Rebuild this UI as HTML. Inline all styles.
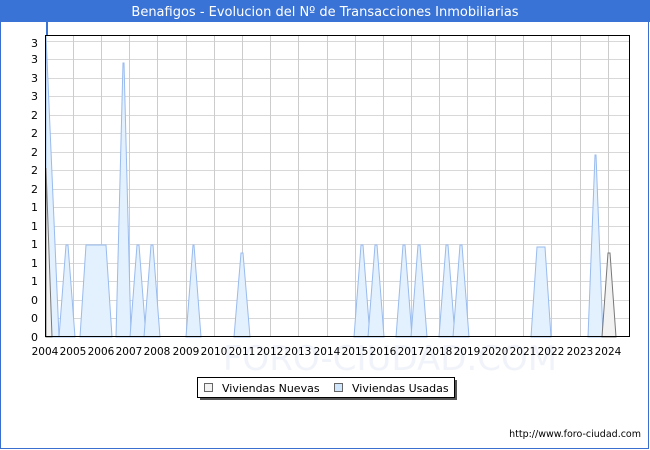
<!DOCTYPE html>
<html><head><meta charset="utf-8"><style>
html,body{margin:0;padding:0;background:#fff}
body{width:650px;height:450px;position:relative;overflow:hidden;font-family:"DejaVu Sans","Liberation Sans",sans-serif}
</style></head><body>
<svg width="650" height="450" xmlns="http://www.w3.org/2000/svg" style="position:absolute;left:0;top:0">
<rect x="0.5" y="0.5" width="648" height="448" fill="#fff" stroke="#3a6fd0"/>
<rect x="0" y="0" width="650" height="22" fill="#3a73d6"/>
<text x="325" y="16" text-anchor="middle" font-size="13" fill="#fff" font-family="DejaVu Sans,sans-serif">Benafigos - Evolucion del Nº de Transacciones Inmobiliarias</text>
<text x="390" y="370" text-anchor="middle" font-size="34" fill="#f1f3fa" font-family="DejaVu Sans,sans-serif">FORO-CIUDAD.COM</text>
<g stroke="#d8d8d8" stroke-width="1">
<line x1="45" y1="318.5" x2="630" y2="318.5"/><line x1="45" y1="300.5" x2="630" y2="300.5"/><line x1="45" y1="281.5" x2="630" y2="281.5"/><line x1="45" y1="263.5" x2="630" y2="263.5"/><line x1="45" y1="244.5" x2="630" y2="244.5"/><line x1="45" y1="226.5" x2="630" y2="226.5"/><line x1="45" y1="207.5" x2="630" y2="207.5"/><line x1="45" y1="189.5" x2="630" y2="189.5"/><line x1="45" y1="170.5" x2="630" y2="170.5"/><line x1="45" y1="152.5" x2="630" y2="152.5"/><line x1="45" y1="133.5" x2="630" y2="133.5"/><line x1="45" y1="115.5" x2="630" y2="115.5"/><line x1="45" y1="96.5" x2="630" y2="96.5"/><line x1="45" y1="78.5" x2="630" y2="78.5"/><line x1="45" y1="59.5" x2="630" y2="59.5"/><line x1="45" y1="41.5" x2="630" y2="41.5"/>
</g>
<g stroke="#cccccc" stroke-width="1">
<line x1="73.5" y1="35" x2="73.5" y2="337"/><line x1="101.5" y1="35" x2="101.5" y2="337"/><line x1="129.5" y1="35" x2="129.5" y2="337"/><line x1="157.5" y1="35" x2="157.5" y2="337"/><line x1="186.5" y1="35" x2="186.5" y2="337"/><line x1="214.5" y1="35" x2="214.5" y2="337"/><line x1="242.5" y1="35" x2="242.5" y2="337"/><line x1="270.5" y1="35" x2="270.5" y2="337"/><line x1="298.5" y1="35" x2="298.5" y2="337"/><line x1="327.5" y1="35" x2="327.5" y2="337"/><line x1="355.5" y1="35" x2="355.5" y2="337"/><line x1="383.5" y1="35" x2="383.5" y2="337"/><line x1="411.5" y1="35" x2="411.5" y2="337"/><line x1="439.5" y1="35" x2="439.5" y2="337"/><line x1="467.5" y1="35" x2="467.5" y2="337"/><line x1="495.5" y1="35" x2="495.5" y2="337"/><line x1="523.5" y1="35" x2="523.5" y2="337"/><line x1="551.5" y1="35" x2="551.5" y2="337"/><line x1="580.5" y1="35" x2="580.5" y2="337"/><line x1="608.5" y1="35" x2="608.5" y2="337"/>
</g>
<g fill="#e3f0fd" stroke="#99bbee" stroke-width="1">
<polygon points="46,35 59,337 46,337"/>
<polygon points="59,337 66,245 68,245 75,337"/>
<polygon points="80,337 86,245 106,245 112,337"/>
<polygon points="116,337 123,63 124,63 131,337"/>
<polygon points="130,337 137,245 139,245 146,337"/>
<polygon points="144,337 151,245 153,245 160,337"/>
<polygon points="186,337 193,245 194,245 201,337"/>
<polygon points="234,337 241,253 243,253 250,337"/>
<polygon points="354,337 361,245 363,245 370,337"/>
<polygon points="368,337 375,245 377,245 384,337"/>
<polygon points="396,337 403,245 405,245 412,337"/>
<polygon points="411,337 418,245 420,245 427,337"/>
<polygon points="439,337 446,245 448,245 455,337"/>
<polygon points="453,337 460,245 462,245 469,337"/>
<polygon points="531,337 537,247 545,247 551,337"/>
<polygon points="588,337 595,155 596,155 603,337"/>
</g>
<line x1="47" y1="22" x2="47" y2="35" stroke="#3a73d6" stroke-width="2"/>
<g fill="#f2f2f2" stroke="#777" stroke-width="1">
<polygon points="46,168 52,337 46,337"/>
<polygon points="602,337 608,253 610,253 616,337"/>
</g>
<rect x="45.5" y="35.5" width="584" height="301" fill="none" stroke="#000"/>
<g font-size="11" fill="#000" text-anchor="end">
<text x="38" y="341">0</text><text x="38" y="322">0</text><text x="38" y="304">0</text><text x="38" y="285">1</text><text x="38" y="267">1</text><text x="38" y="248">1</text><text x="38" y="230">1</text><text x="38" y="211">1</text><text x="38" y="193">2</text><text x="38" y="174">2</text><text x="38" y="156">2</text><text x="38" y="137">2</text><text x="38" y="119">2</text><text x="38" y="100">3</text><text x="38" y="82">3</text><text x="38" y="63">3</text><text x="38" y="47">3</text>
</g>
<g font-size="10.5" fill="#000" text-anchor="middle">
<text x="45" y="355">2004</text><text x="73" y="355">2005</text><text x="101" y="355">2006</text><text x="129" y="355">2007</text><text x="157" y="355">2008</text><text x="186" y="355">2009</text><text x="214" y="355">2010</text><text x="242" y="355">2011</text><text x="270" y="355">2012</text><text x="298" y="355">2013</text><text x="327" y="355">2014</text><text x="355" y="355">2015</text><text x="383" y="355">2016</text><text x="411" y="355">2017</text><text x="439" y="355">2018</text><text x="467" y="355">2019</text><text x="495" y="355">2020</text><text x="523" y="355">2021</text><text x="551" y="355">2022</text><text x="580" y="355">2023</text><text x="608" y="355">2024</text>
</g>
<rect x="200" y="380" width="257" height="20" fill="#555"/>
<rect x="197.5" y="377.5" width="257" height="20" fill="#fff" stroke="#000"/>
<rect x="204.5" y="383.5" width="8" height="8" fill="#f2f2f2" stroke="#666"/>
<text x="222" y="392" font-size="11">Viviendas Nuevas</text>
<rect x="334.5" y="383.5" width="8" height="8" fill="#cfe6fd" stroke="#666"/>
<text x="352" y="392" font-size="11">Viviendas Usadas</text>
<text x="641" y="437" text-anchor="end" font-size="9.5">http://www.foro-ciudad.com</text>
</svg>
</body></html>
